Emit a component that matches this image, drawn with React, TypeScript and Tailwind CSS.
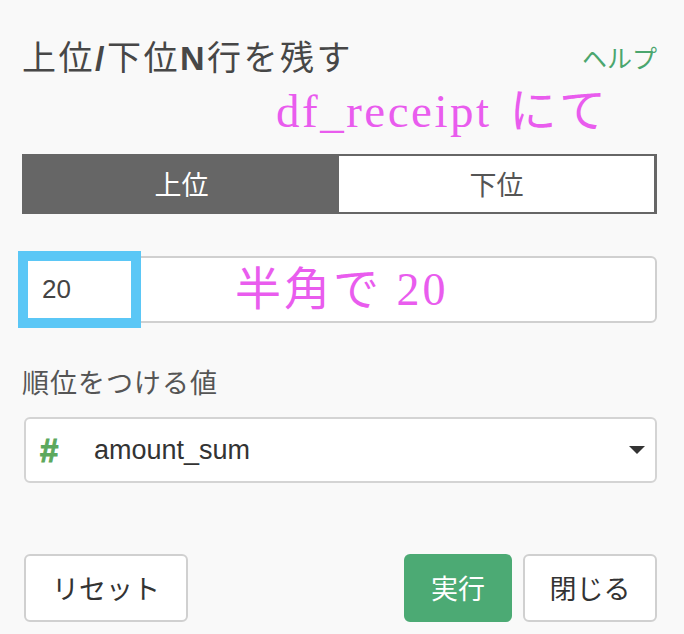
import { FC } from "react";

const jp = "font-['Noto_Sans_CJK_JP','Noto_Sans',sans-serif]";
const latin = "font-['Liberation_Sans','Noto_Sans_CJK_JP',sans-serif]";
const serif = "font-['Liberation_Serif','Noto_Sans_CJK_JP',serif]";

const App: FC = () => {
  return (
    <div className="w-[684px] h-[634px] bg-[#f9f9f9] pl-[22px] pr-[27px] flex flex-col overflow-hidden">
      {/* header */}
      <div className="mt-[35px] h-[44px] flex items-center justify-between">
        <h1 className={`${jp} text-[34px] leading-none tracking-[2.5px] text-[#474747] whitespace-nowrap`}>
          上位<span className={`${latin} font-bold`}>/</span>下位<span className={`${latin} font-bold`}>N</span>行を残す
        </h1>
        <a className={`${jp} text-[25px] leading-none text-[#4ba66e]`}>ヘルプ</a>
      </div>

      {/* annotation */}
      <div className="mt-[7px] h-[50px] flex items-center pl-[254px]">
        <span className={`${serif} text-[47px] leading-none tracking-[2.5px] text-[#e95cee] whitespace-nowrap`}>
          df_receipt<span className="ml-[18px]">にて</span>
        </span>
      </div>

      {/* toggle */}
      <div className="mt-[18px] h-[60px] flex border-t-2 border-b-2 border-l-2 border-r-[3px] border-[#666666]">
        <button className={`${jp} flex-1 bg-[#666666] text-white text-[27px]`}>上位</button>
        <button className={`${jp} flex-1 bg-white text-[#555555] text-[27px]`}>下位</button>
      </div>

      {/* number input */}
      <div className="relative mt-[42px] h-[67px] bg-white border-2 border-[#d0d0d0] rounded-md flex items-center pl-[18px]">
        <span className={`${latin} text-[26px] text-[#444444]`}>20</span>
        <div className="absolute -left-[6px] -top-[7px] w-[123px] h-[77px] border-[10px] border-[#5bc7f6]" />
        <span className={`absolute left-[211px] top-[4px] ${serif} text-[46px] leading-[56px] tracking-[3px] text-[#e95cee] whitespace-nowrap`}>
          半角で 20
        </span>
      </div>

      {/* label */}
      <div className={`mt-[44px] h-[30px] flex items-center ${jp} text-[27px] tracking-[1px] text-[#555555]`}>
        順位をつける値
      </div>

      {/* select */}
      <div className="mt-[20px] ml-[2px] h-[66px] bg-white border-2 border-[#d4d4d4] rounded-md flex items-center pl-[14px] pr-[10px]">
        <span className={`${latin} font-bold text-[33px] leading-none text-[#5ca85d] w-[54px] [-webkit-text-stroke:1px_#5ca85d]`}>#</span>
        <span className={`${latin} text-[27px] text-[#333333] flex-1`}>amount_sum</span>
        <svg width="16" height="8" viewBox="0 0 16 8">
          <path d="M0 0 H16 L8 8 Z" fill="#333333" />
        </svg>
      </div>

      {/* buttons */}
      <div className="mt-[71px] ml-[2px] h-[68px] flex gap-[11px]">
        <button className={`${jp} w-[164px] bg-white border-2 border-[#d0d0d0] rounded-md text-[27px] text-[#333333]`}>
          リセット
        </button>
        <div className="flex-1" />
        <button className={`${jp} w-[108px] bg-[#4caa74] rounded-md text-[27px] text-white`}>実行</button>
        <button className={`${jp} w-[134px] bg-white border-2 border-[#d0d0d0] rounded-md text-[27px] text-[#333333]`}>
          閉じる
        </button>
      </div>
    </div>
  );
};

export default App;
